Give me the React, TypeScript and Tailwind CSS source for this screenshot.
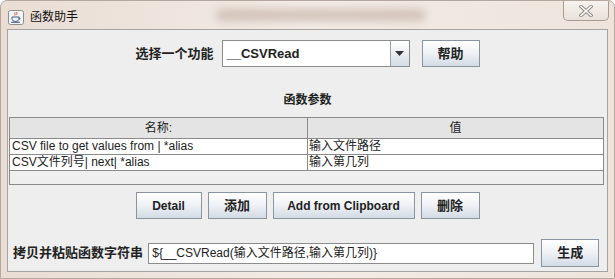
import React from "react";

const cjk = { fontFamily: '"Liberation Sans", "Noto Sans CJK SC", sans-serif' };

// Swing style button with light gradient
function JButton({ label, className = "" }: { label: string; className?: string }) {
  return (
    <button
      className={`h-[27px] border border-[#8a95a2] bg-gradient-to-b from-[#ffffff] via-[#eef1f5] to-[#d3dbe5] text-[12px] font-bold text-[#222] flex items-center justify-center ${className}`}
      style={cjk}
    >
      {label}
    </button>
  );
}

function JavaIcon() {
  return (
    <svg width="16" height="15" viewBox="0 0 16 15">
      <rect x="0.5" y="0.5" width="15" height="14" rx="2" fill="#f4f4f4" stroke="#8d8d8d" />
      <path d="M7 2.5c-1.2 1 .8 1.6-.2 3M9 2c-1 1 .7 1.4-.3 2.8" stroke="#c0392b" strokeWidth="0.9" fill="none" />
      <path d="M4 7h7v1.8c0 1.6-1.4 2.6-3.5 2.6S4 10.4 4 8.8z" fill="none" stroke="#3c5a8a" strokeWidth="1" />
      <path d="M11 7.6c1.4 0 1.4 1.8 0 1.8" stroke="#3c5a8a" strokeWidth="0.9" fill="none" />
      <path d="M3 12.3h9" stroke="#3c5a8a" strokeWidth="1" />
    </svg>
  );
}

function CloseButton() {
  return (
    <div className="w-[46px] h-[20px] rounded-b-[5px] border border-t-0 border-[#a89d95] bg-gradient-to-b from-[#f7f2ee] to-[#e9e1da] flex items-center justify-center">
      <svg width="14" height="12" viewBox="0 0 14 12">
        <path d="M2 1.5l10 9M12 1.5l-10 9" stroke="#8a8480" strokeWidth="3.4" strokeLinecap="square" />
        <path d="M2 1.5l10 9M12 1.5l-10 9" stroke="#f8f8f8" strokeWidth="1.6" strokeLinecap="square" />
      </svg>
    </div>
  );
}

const rows = [
  ["CSV file to get values from | *alias", "输入文件路径"],
  ["CSV文件列号| next| *alias", "输入第几列"],
];

export default function App() {
  return (
    <div
      className="w-[615px] h-[279px] flex flex-col rounded-t-[7px] border border-[#b3a79e] bg-gradient-to-r from-[#e9ddd4] via-[#f3ebe5] to-[#eee4dc] overflow-hidden"
      style={cjk}
    >
      {/* title bar */}
      <div className="h-[28px] flex items-start shrink-0">
        <div className="flex items-center gap-[6px] pl-[7px] pt-[7px]">
          <JavaIcon />
          <span className="text-[12px] text-[#111]">函数助手</span>
        </div>
        <div className="flex-1 flex justify-center pt-[8px]">
          <div className="w-[210px] h-[12px] rounded-full bg-[#8a6d5c] opacity-30 blur-[4px]" />
        </div>
        <div className="mr-[5px]">
          <CloseButton />
        </div>
      </div>

      {/* content panel */}
      <div className="flex-1 mx-[6px] mb-[6px] border border-[#a4a4a4] bg-[#eeeeee] flex flex-col">
        <div className="mt-[10px] h-[27px] flex items-center justify-center">
          <span className="text-[13px] font-bold text-[#222] mr-[8px]">选择一个功能</span>
          <div className="w-[188px] h-[27px] border border-[#8c8c8c] bg-white flex">
            <div className="flex-1 flex items-center pl-[4px] text-[13px] font-bold text-[#222]">__CSVRead</div>
            <div className="w-[19px] border-l border-[#9aa3ad] bg-gradient-to-b from-[#ffffff] to-[#d5dce5] flex items-center justify-center">
              <svg width="9" height="5" viewBox="0 0 9 5">
                <path d="M0 0h9L4.5 5z" fill="#333" />
              </svg>
            </div>
          </div>
          <JButton label="帮助" className="ml-[12px] w-[58px] text-[13px]" />
        </div>

        <div className="mt-[26px] text-center text-[12px] font-bold text-[#222] leading-[14px]">函数参数</div>

        {/* table */}
        <div className="mt-[10px] ml-[1px] mr-[3px] h-[68px] border border-[#8a8a8a] flex flex-col">
          <div className="h-[21px] flex bg-[#e4e4e4] border-b border-[#8a8a8a] text-[12px] text-[#222]">
            <div className="w-[298px] border-r border-[#8a8a8a] flex items-center justify-center">名称:</div>
            <div className="flex-1 flex items-center justify-center">值</div>
          </div>
          {rows.map(([name, value]) => (
            <div key={name} className="h-[16px] flex bg-white border-b border-[#8a8a8a] text-[12px] text-[#222] leading-[15px]">
              <div className="w-[298px] border-r border-[#8a8a8a] pl-[2px] whitespace-nowrap">{name}</div>
              <div className="flex-1 pl-[1px]">{value}</div>
            </div>
          ))}
          <div className="flex-1 bg-[#efefef]" />
        </div>

        <div className="mt-[7px] flex justify-center gap-[6px]">
          <JButton label="Detail" className="w-[66px]" />
          <JButton label="添加" className="w-[59px] text-[13px]" />
          <JButton label="Add from Clipboard" className="w-[142px]" />
          <JButton label="删除" className="w-[59px] text-[13px]" />
        </div>

        <div className="mt-[20px] flex items-center pl-[5px] pr-[8px]">
          <span className="text-[13px] font-bold text-[#222] w-[136px]">拷贝并粘贴函数字符串</span>
          <div className="w-[388px] h-[21px] border border-[#8c8c8c] bg-white flex items-center pl-[3px] text-[12px] text-[#222] whitespace-nowrap">
            {"${__CSVRead(输入文件路径,输入第几列)}"}
          </div>
          <JButton label="生成" className="ml-[7px] w-[58px] h-[28px] text-[13px]" />
        </div>
      </div>
    </div>
  );
}
